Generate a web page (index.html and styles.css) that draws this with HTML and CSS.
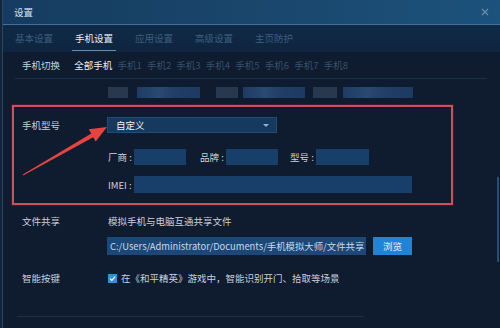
FILE: index.html
```html
<!DOCTYPE html>
<html lang="zh-CN">
<head>
<meta charset="utf-8">
<title>设置</title>
<link rel="stylesheet" href="styles.css">
</head>
<body>
<div class="window">
  <header class="titlebar">
    <span class="title">设置</span>
    <svg class="close" width="8" height="8" viewBox="0 0 8 8"><path d="M1 1L7 7M7 1L1 7" stroke="#6f8dab" stroke-width="1.1" fill="none"/></svg>
  </header>
  <nav class="tabs">
    <span class="tab">基本设置</span>
    <span class="tab active">手机设置</span>
    <span class="tab">应用设置</span>
    <span class="tab">高级设置</span>
    <span class="tab">主页防护</span>
  </nav>
  <main class="content">
    <div class="phones">
      <span class="phones-label">手机切换</span>
      <span class="phone active">全部手机</span>
      <span class="phone">手机1</span>
      <span class="phone">手机2</span>
      <span class="phone">手机3</span>
      <span class="phone">手机4</span>
      <span class="phone">手机5</span>
      <span class="phone">手机6</span>
      <span class="phone">手机7</span>
      <span class="phone">手机8</span>
    </div>
    <div class="ghost-row">
      <i class="g gray w20"></i>
      <i class="g blue w63 ml9"></i>
      <i class="g gray w22 ml16"></i>
      <i class="g blue w62 ml5"></i>
      <i class="g gray w24 ml8"></i>
      <i class="g blue w70 ml6"></i>
    </div>
    <div class="row r-model">
      <span class="label">手机型号</span>
      <div class="select"><span>自定义</span><i class="caret"></i></div>
    </div>
    <div class="row r-fields">
      <span class="label"></span>
      <div class="fields">
        <span class="flabel">厂商 :</span><span class="input w52"></span>
        <span class="flabel ml14">品牌 :</span><span class="input w52"></span>
        <span class="flabel ml12">型号 :</span><span class="input w53"></span>
      </div>
    </div>
    <div class="row r-imei">
      <span class="label"></span>
      <div class="fields">
        <span class="flabel">IMEI :</span><span class="input w278"></span>
      </div>
    </div>
    <div class="row r-share">
      <span class="label">文件共享</span>
      <span class="desc">模拟手机与电脑互通共享文件</span>
    </div>
    <div class="row r-path">
      <span class="label"></span>
      <div class="path">C:/Users/Administrator/Documents/手机模拟大师/文件共享</div>
      <button class="browse">浏览</button>
    </div>
    <div class="row r-keys">
      <span class="label">智能按键</span>
      <span class="check"><svg width="9" height="9" viewBox="0 0 9 9"><path d="M2 4.6L3.8 6.3L7.2 2.6" stroke="#fff" stroke-width="1.2" fill="none"/></svg></span>
      <span class="desc">在《和平精英》游戏中，智能识别开门、拾取等场景</span>
    </div>
    <div class="divider"></div>
  </main>
  <div class="scrollbar"></div>
  <div class="annotation"></div>
  <svg class="arrow" width="500" height="328" viewBox="0 0 500 328">
    <polygon points="22.8,174.6 91.3,133.6 88.7,129.3 107,127 95.7,141.5 93.3,137.2 23.2,175.4" fill="#e5443f"/>
  </svg>
</div>
</body>
</html>
```

FILE: styles.css
```css
* { box-sizing: border-box; }
html, body { margin: 0; padding: 0; }
body {
  width: 500px;
  height: 328px;
  overflow: hidden;
  background: #0e1a2d;
  font-family: "Noto Sans CJK SC", "Noto Sans", sans-serif;
  font-size: 9.5px;
  color: #c8d2dc;
}
.window {
  position: relative;
  width: 500px;
  height: 328px;
  background: #0f1b2f;
  border-left: 2px solid #14253b;
}
.window::before {
  content: "";
  position: absolute;
  left: 0; top: 0; bottom: 0;
  width: 1px;
  background: #2a4664;
}
.titlebar {
  height: 25px;
  display: flex;
  align-items: center;
  justify-content: space-between;
  padding: 0 11px 0 12px;
  background: linear-gradient(90deg, #163b60 0%, #1a476d 55%, #1c527c 100%);
  border-bottom: 1px solid #3e709a;
}
.title { color: #d9e3ec; line-height: 24px; }
.close { display: block; }
.tabs {
  height: 27px;
  display: flex;
  gap: 16px;
  padding-left: 10px;
  background: linear-gradient(180deg, #0f2a46 0%, #0f2540 100%);
}
.tab {
  padding: 2px 3px 0;
  line-height: 23px;
  height: 26px;
  color: #3c5e7e;
  border-bottom: 1px solid transparent;
}
.tab.active { color: #e4edf5; border-bottom-color: #5f8db2; }
.content { padding-left: 20px; }
.phones {
  display: flex;
  align-items: center;
  gap: 5.2px;
  height: 27px;
  margin: 0 13px 0 -7px;
  padding-left: 7px;
  border-bottom: 1px solid #1c3149;
}
.phones-label { margin-right: 9px; color: #c9d3dd; }
.phone { color: #36516c; }
.phone.active { color: #e8eef4; }
.ghost-row {
  display: flex;
  height: 11px;
  margin-top: 8px;
  padding-left: 86px;
}
.g { display: block; height: 11px; }
.gray { background: #28384e; }
.blue { background: linear-gradient(90deg, #1e3b63 0%, #294a72 35%, #213e66 60%, #1d3a62 100%); }
.w20 { width: 20px; } .w22 { width: 22px; } .w24 { width: 24px; }
.w62 { width: 62px; } .w63 { width: 63px; } .w70 { width: 70px; }
.ml5 { margin-left: 5px; } .ml6 { margin-left: 6px; } .ml8 { margin-left: 8px; }
.ml9 { margin-left: 9px; } .ml16 { margin-left: 16px; }
.row { display: flex; align-items: center; }
.label { width: 86px; flex: none; color: #c6cfd9; }
.r-model { margin-top: 19px; height: 16px; }
.select {
  width: 170px;
  height: 16px;
  margin-left: -1px;
  display: flex;
  align-items: center;
  justify-content: space-between;
  padding: 0 7px 0 8px;
  background: #163a5f;
  border: 1px solid #1f4d77;
  color: #eef3f8;
}
.caret {
  width: 0; height: 0;
  border-left: 3.5px solid transparent;
  border-right: 3.5px solid transparent;
  border-top: 3.5px solid #8fb2d2;
}
.r-fields { margin-top: 16px; height: 16px; }
.r-imei { margin-top: 11px; height: 17px; }
.fields { display: flex; align-items: center; height: 100%; }
.flabel { width: 26px; color: #ccd5df; white-space: nowrap; }
.input { display: block; height: 100%; background: #173f69; }
.w52 { width: 52px; } .w53 { width: 53px; } .w278 { width: 278px; }
.ml12 { margin-left: 12px; } .ml14 { margin-left: 14px; }
.r-share { margin-top: 21px; height: 14px; }
.desc { color: #c8d1db; }
.r-path { margin-top: 9px; height: 18px; }
.path {
  width: 259px;
  height: 18px;
  margin-left: -1px;
  padding-left: 3px;
  line-height: 18px;
  font-size: 9.4px;
  white-space: nowrap;
  overflow: hidden;
  background: #1b4877;
  color: #c9d8e7;
}
.browse {
  margin-left: 7px;
  width: 39px;
  height: 18px;
  border: none;
  padding: 0;
  background: #1f84d8;
  color: #e6f1fc;
  font: inherit;
}
.r-keys { margin-top: 16px; height: 14px; }
.check {
  width: 9px; height: 9px;
  margin-right: 4px;
  background: #2b8fe2;
  display: flex;
}
.divider {
  width: 347px;
  height: 1px;
  margin: 31px 0 0 -5px;
  background: #1f2f44;
}
.scrollbar {
  position: absolute;
  right: 1px;
  top: 177px;
  width: 2px;
  height: 85px;
  background: #254f77;
}
.annotation {
  position: absolute;
  left: 10px;
  top: 105px;
  width: 441px;
  height: 100px;
  border: 2px solid #c9525e;
  box-shadow: 0 0 0 1px rgba(120, 20, 40, 0.5);
}
.arrow { position: absolute; left: -2px; top: 0; pointer-events: none; }
```
